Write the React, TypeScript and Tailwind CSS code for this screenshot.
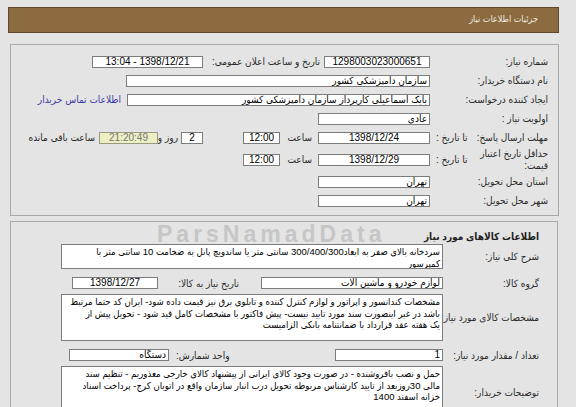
import type { FC, ReactNode } from "react";

const box = "bg-white border border-[#7c7c7c] h-[12px] leading-[10px] text-[10px] text-black px-[2px] overflow-hidden whitespace-nowrap";
const area = "w-[382px] bg-white border border-[#7c7c7c] px-[2px] pt-[1px] text-[9.5px] leading-[11.5px] text-black overflow-hidden";

const Box: FC<{ w: string; center?: boolean; children?: ReactNode; extra?: string }> = ({ w, center, children, extra }) => (
  <div className={`${box} ${w} shrink-0 ${center ? "text-center" : "text-right"} ${extra ?? ""}`}>{children}</div>
);

const Row: FC<{ h?: string; label: ReactNode; sub?: string; children?: ReactNode }> = ({ h = "h-[19px]", label, sub, children }) => (
  <div className={`flex items-center ${h}`}>
    <div className="w-[118px] shrink-0 flex items-center justify-between">
      <div className="leading-[12px]">{label}</div>
      {sub && <div className="pl-[6px]">{sub}</div>}
    </div>
    {children}
  </div>
);

const Row2: FC<{ h?: string; label: ReactNode; children?: ReactNode }> = ({ h = "h-[20px]", label, children }) => (
  <div className={`flex items-center ${h}`}>
    <div className="w-[96px] shrink-0">{label}</div>
    {children}
  </div>
);

export default function App() {
  return (
    <div
      dir="rtl"
      className="relative w-[576px] h-[407px] overflow-hidden whitespace-nowrap bg-[#e4e4e4] text-[10px] text-[#2a2a2a]"
      style={{ fontFamily: '"Liberation Sans", "DejaVu Sans Condensed", "DejaVu Sans", sans-serif' }}
    >
      <div className="pt-[7px] pr-[17px] pl-[8px]">
        <div className="h-[26px] bg-[#8c6b40] border border-[#5e4a2e] flex items-center pr-[20px] text-[9px] text-[#f3ece0]">
          جزئیات اطلاعات نیاز
        </div>
      </div>

      {/* panel 1 */}
      <div className="mt-[11px] mr-[17px] ml-[10px] h-[172px] border border-[#a9a9a9] pt-[7px] pr-[10px]">
        <Row label="شماره نیاز:">
          <Box w="w-[106px]" center>1298003023000651</Box>
          <div className="w-[121px] pr-[4px]">تاریخ و ساعت اعلان عمومی:</div>
          <Box w="w-[111px]" center>1398/12/21 - 13:04</Box>
        </Row>
        <Row label="نام دستگاه خریدار:">
          <Box w="w-[304px]">سازمان دامپزشکی کشور</Box>
        </Row>
        <Row label="ایجاد کننده درخواست:">
          <Box w="w-[303px]">بابک اسماعیلی کارپرداز سازمان دامپزشکی کشور</Box>
          <div className="pr-[6px] text-[#3a3aa8]">اطلاعات تماس خریدار</div>
        </Row>
        <Row label="اولویت نیاز :">
          <Box w="w-[112px]">عادی</Box>
        </Row>
        <Row label="مهلت ارسال پاسخ:" sub="تا تاریخ :">
          <Box w="w-[112px]" center>1398/12/24</Box>
          <div className="w-[38px] pr-[6px]">ساعت</div>
          <Box w="w-[37px]" center>12:00</Box>
          <div className="w-[40px]" />
          <Box w="w-[22px]" center>2</Box>
          <div className="w-[23px] pr-[3px]">روز و</div>
          <Box w="w-[59px]" center extra="!bg-[#eeeec4] !text-[#777] !border-[#9a9a80]">21:20:49</Box>
          <div className="pr-[4px]">ساعت باقی مانده</div>
        </Row>
        <Row h="h-[25px]" label={<>حداقل تاریخ اعتبار<br />قیمت:</>} sub="تا تاریخ :">
          <Box w="w-[112px]" center>1398/12/29</Box>
          <div className="w-[38px] pr-[6px]">ساعت</div>
          <Box w="w-[37px]" center>12:00</Box>
        </Row>
        <Row label="استان محل تحویل:">
          <Box w="w-[112px]">تهران</Box>
        </Row>
        <Row label="شهر محل تحویل:">
          <Box w="w-[112px]">تهران</Box>
        </Row>
      </div>

      {/* panel 2 */}
      <div className="mt-[5px] mr-[18px] ml-[10px] h-[200px] border border-[#a9a9a9] pt-[7px] pr-[18px]">
        <div className="h-[14px] flex items-center font-bold text-[10px] text-[#222]">اطلاعات کالاهای مورد نیاز</div>
        <div className="flex items-center mt-[1px]">
          <div className="w-[96px] shrink-0">شرح کلی نیاز:</div>
          <div className={`${area} h-[25px]`}>
            سردخانه بالای صفر به ابعاد300/400/300 سانتی متر یا ساندویچ پانل به ضخامت 10 سانتی متر با
            <br />
            کمپرسور
          </div>
        </div>
        <div className="mt-[4px]">
          <Row2 label="گروه کالا:">
            <Box w="w-[182px]">لوازم خودرو و ماشین آلات</Box>
            <div className="w-[103px] pr-[22px]">تاریخ نیاز به کالا:</div>
            <Box w="w-[86px]" center>1398/12/27</Box>
          </Row2>
        </div>
        <div className="flex items-center mt-[1px]">
          <div className="w-[96px] shrink-0">مشخصات کالای مورد نیاز:</div>
          <div className={`${area} h-[47px]`}>
            مشخصات کندانسور و اپراتور و لوازم کنترل کننده و تابلوی برق نیز قیمت داده شود- ایران کد حتما مرتبط
            <br />
            باشد در غیر اینصورت سند مورد تایید نیست- پیش فاکتور با مشخصات کامل قید شود - تحویل پیش از
            <br />
            یک هفته عقد قرارداد با ضمانتنامه بانکی الزامیست
          </div>
        </div>
        <div className="mt-[4px]">
          <Row2 label="تعداد / مقدار مورد نیاز:">
            <Box w="w-[108px]">1</Box>
            <div className="w-[166px] flex justify-end pl-[7px]">واحد شمارش:</div>
            <Box w="w-[100px]">دستگاه</Box>
          </Row2>
        </div>
        <div className="flex items-center mt-[1px]">
          <div className="w-[96px] shrink-0 pt-[6px]">توضیحات خریدار:</div>
          <div className={`${area} h-[47px]`}>
            حمل و نصب بافروشنده - در صورت وجود کالای ایرانی  از پیشنهاد کالای خارجی معذوریم - تنظیم سند
            <br />
            مالی 30روزبعد از تایید کارشناس مربوطه تحویل درب انبار سازمان واقع در اتوبان کرج- پرداخت اسناد
            <br />
            خزانه اسفند 1400
          </div>
        </div>
      </div>

      {/* watermark */}
      <div
        dir="ltr"
        className="pointer-events-none absolute left-[157px] top-[217px] text-[23px] font-bold tracking-[4px] text-[#9a9a9a] opacity-40"
      >
        ParsNamadData
      </div>
    </div>
  );
}
